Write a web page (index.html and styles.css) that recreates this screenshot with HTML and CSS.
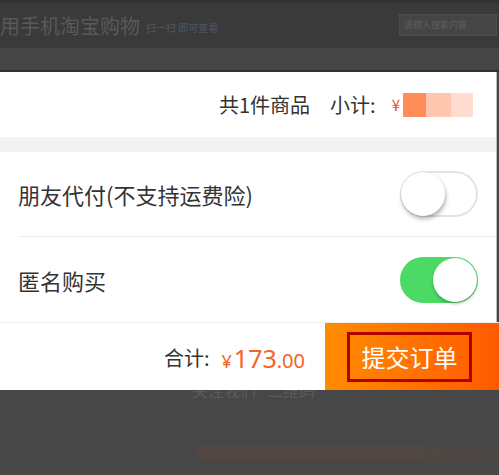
FILE: index.html
```html
<!DOCTYPE html>
<html lang="zh-CN">
<head>
    <meta charset="UTF-8">
    <meta name="viewport" content="width=device-width, initial-scale=1.0">
    <title>提交订单</title>
    <link rel="stylesheet" href="styles.css">
</head>
<body>
    <div class="top">
        <div class="brand">
            <span class="brand-title">用手机淘宝购物</span>
            <span class="brand-sub">扫一扫 即可查看</span>
        </div>
        <div class="search">请输入搜索内容</div>
    </div>
    <div class="band"></div>

    <div class="sheet">
        <div class="summary">
            <span>共1件商品</span>
            <span class="gap">小计:</span>
            <span class="yen">¥</span>
            <span class="blur">
                <i class="b1"></i><i class="b2"></i><i class="b3"></i>
            </span>
        </div>
        <div class="spacer"></div>
        <div class="option">
            <span>朋友代付(不支持运费险)</span>
            <span class="switch"><span class="knob"></span></span>
        </div>
        <div class="option line">
            <span>匿名购买</span>
            <span class="switch on"><span class="knob"></span></span>
        </div>
    </div>

    <div class="bar">
        <div class="total">
            <span class="label">合计:</span>
            <span class="price"><small>¥</small>173<em>.00</em></span>
        </div>
        <div class="submit">
            <span class="submit-box">提交订单</span>
        </div>
    </div>

    <div class="under">
        <div class="under-text">关注我们 &nbsp; 二维码</div>
    </div>
    <div class="stripe"></div>
</body>
</html>
```

FILE: styles.css
```css
*{
    padding: 0;
    margin: 0;
    box-sizing: border-box;
}
body{
    background-color: #474747;
    font-family: "Noto Sans CJK SC", "Noto Sans", sans-serif;
    width: 499px;
    overflow: hidden;
}
.top{
    height: 48px;
    background-color: #3a3a3a;
    border-top: 3px solid #333;
    display: flex;
    align-items: center;
    justify-content: space-between;
}
.brand{
    display: flex;
    align-items: center;
}
.brand-title{
    color: #595959;
    font-size: 20px;
}
.brand-sub{
    color: #4c5867;
    font-size: 10px;
    margin-left: 6px;
    margin-top: 3px;
}
.search{
    width: 98px;
    height: 22px;
    margin-right: 2px;
    margin-top: -2px;
    background-color: #454545;
    border: 1px solid #4d4d4d;
    color: #5e5e5e;
    font-size: 9px;
    line-height: 20px;
    padding-left: 4px;
}
.band{
    height: 24px;
    background-color: #454545;
    border-bottom: 2px solid #303030;
}

.sheet{
    background-color: #fff;
    margin-right: 2px;
    border-right: 1px solid #bdbdbd;
}
.summary{
    height: 65px;
    display: flex;
    align-items: center;
    justify-content: flex-end;
    padding-right: 23px;
    font-size: 20px;
    color: #333;
}
.gap{
    margin-left: 20px;
}
.yen{
    color: #f04e1a;
    font-size: 15px;
    margin-left: 16px;
}
.blur{
    display: flex;
    height: 24px;
    margin-left: 3px;
}
.blur i{
    display: block;
    height: 24px;
}
.b1{ width: 23px; background-color: #ff8d5c; }
.b2{ width: 25px; background-color: #ffc7b0; }
.b3{ width: 22px; background-color: #ffded1; }

.spacer{
    height: 15px;
    background-color: #f2f2f2;
}
.option{
    height: 84px;
    display: flex;
    align-items: center;
    justify-content: space-between;
    padding: 0 18px;
    font-size: 22px;
    color: #333;
}
.option.line{
    height: 86px;
    border-top: 1px solid #ececec;
    margin-left: 18px;
    padding-left: 0;
}
.switch{
    width: 78px;
    height: 46px;
    border-radius: 23px;
    border: 2px solid #e3e3e3;
    background-color: #fff;
    display: flex;
    align-items: center;
}
.knob{
    width: 44px;
    height: 44px;
    border-radius: 50%;
    background-color: #fff;
    box-shadow: 1px 3px 4px rgba(0,0,0,0.3);
    margin-left: -1px;
}
.switch.on{
    background-color: #4cd964;
    border-color: #4cd964;
    justify-content: flex-end;
}
.switch.on .knob{
    margin-left: 0;
    margin-right: -1px;
    box-shadow: 0 2px 3px rgba(0,0,0,0.25);
}

.bar{
    height: 68px;
    display: flex;
    background-color: #fff;
    border-top: 1px solid #eee;
}
.total{
    flex: 1;
    display: flex;
    align-items: center;
    justify-content: flex-end;
    padding-right: 20px;
    padding-top: 2px;
}
.label{
    font-size: 20px;
    color: #333;
}
.price{
    color: #f5622a;
    font-size: 25px;
    margin-left: 12px;
    font-family: "Noto Sans", sans-serif;
}
.price small{
    font-size: 18px;
    margin-right: 2px;
}
.price em{
    font-style: normal;
    font-size: 20px;
}
.submit{
    width: 174px;
    background: linear-gradient(to right, #ff8c00, #ff5a00);
    display: flex;
    align-items: center;
    padding-left: 22px;
}
.submit-box{
    width: 125px;
    height: 50px;
    border: 3px solid #b20000;
    color: #fff;
    font-size: 24px;
    display: flex;
    align-items: center;
    justify-content: center;
}

.under{
    height: 8px;
    overflow: hidden;
    padding-left: 192px;
}
.under-text{
    color: #5b5b5b;
    font-size: 16px;
    line-height: 16px;
    margin-top: -8px;
}
.stripe{
    height: 16px;
    margin-top: 47px;
    margin-left: 195px;
    border-radius: 8px 0 0 8px;
    background: linear-gradient(to right, #514640, #524641 70%, #4b4644);
}
```
